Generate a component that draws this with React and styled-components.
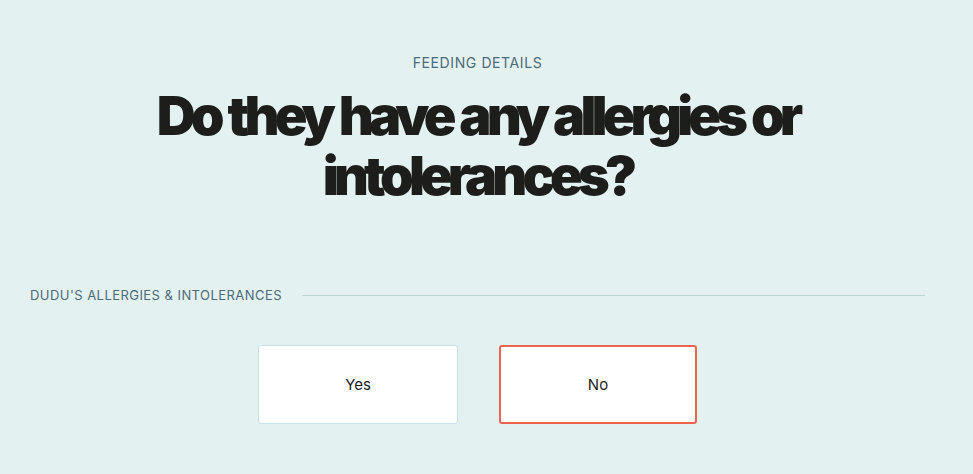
import React from "react";
import styled, { createGlobalStyle } from "styled-components";

const GlobalStyle = createGlobalStyle`
    html, body {
        margin: 0;
        background: #e3f1f1;
        font-family: Inter, "Noto Sans", sans-serif;
    }
`;

const Page = styled.div`
    width: 955px;
    height: 474px;
    padding: 54px 30px 0;
    box-sizing: border-box;
`;

const Header = styled.header`
    display: flex;
    flex-direction: column;
    align-items: center;
    text-align: center;
`;

const Eyebrow = styled.p`
    margin: 0;
    font-size: 14px;
    line-height: 17px;
    color: #4d6b78;
    letter-spacing: 0.6px;
`;

const Title = styled.h1`
    margin: 15px 0 0;
    font-size: 54px;
    line-height: 60px;
    font-weight: 900;
    letter-spacing: -4.9px;
    word-spacing: 2px;
    color: #1d1d1b;
`;

const FieldLabel = styled.div`
    display: flex;
    align-items: center;
    gap: 20px;
    margin-top: 81px;
    font-size: 13px;
    color: #4d6b78;
    letter-spacing: 0.45px;

    &::after {
        content: "";
        flex: 1;
        height: 1px;
        background: #bcd6d6;
    }
`;

const Options = styled.div`
    display: flex;
    justify-content: center;
    align-items: center;
    gap: 41px;
    margin-top: 42px;
`;

const Option = styled.button`
    width: ${p => (p.$selected ? "198px" : "200px")};
    height: 79px;
    box-sizing: border-box;
    background: #fff;
    border: ${p => (p.$selected ? "2px solid #ec6450" : "1px solid #c7e3e8")};
    border-radius: 3px;
    font-family: Inter, "Noto Sans", sans-serif;
    font-size: 15px;
    color: #1d1d1b;
    cursor: pointer;
`;

export default function App() {
    return (
        <>
            <GlobalStyle />
            <Page>
                <Header>
                    <Eyebrow>FEEDING DETAILS</Eyebrow>
                    <Title>
                        Do they have any allergies or
                        <br />
                        intolerances?
                    </Title>
                </Header>
                <FieldLabel>DUDU'S ALLERGIES &amp; INTOLERANCES</FieldLabel>
                <Options>
                    <Option>Yes</Option>
                    <Option $selected>No</Option>
                </Options>
            </Page>
        </>
    );
}
